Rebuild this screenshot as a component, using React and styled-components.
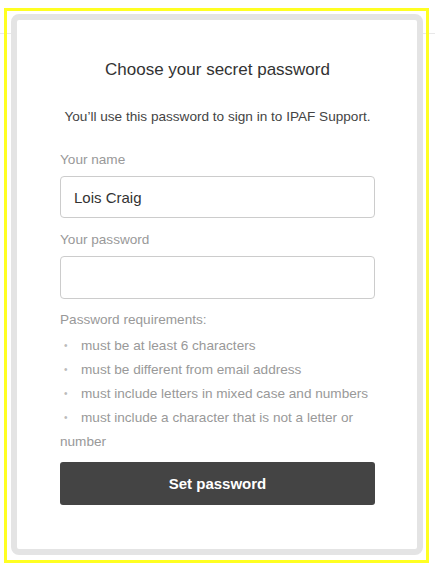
import React from "react";
import styled, { createGlobalStyle } from "styled-components";

const GlobalStyle = createGlobalStyle`
  html, body {
    margin: 0;
    padding: 0;
    background: #fff;
    font-family: "Liberation Sans", Arial, sans-serif;
  }
  body {
    background: linear-gradient(#fff 33px, #e8e8e8 33px, #e8e8e8 34px, #fff 34px) no-repeat;
  }
`;

const Highlight = styled.div`
  box-sizing: border-box;
  width: 425px;
  margin: 8px 0 0 4px;
  border: 3px solid #ffff22;
  padding: 3px 3px 5px 4px;
`;

const Frame = styled.div`
  border: 6px solid #e4e4e4;
  border-radius: 8px;
  background: #fff;
  padding: 40px 42px 44px 43px;
`;

const Title = styled.h1`
  margin: 0;
  font-size: 17px;
  line-height: 20px;
  font-weight: normal;
  color: #333;
  text-align: center;
`;

const Intro = styled.p`
  margin: 27px -10px 0;
  font-size: 13.6px;
  line-height: 20px;
  color: #444;
  text-align: center;
  white-space: nowrap;
`;

const Label = styled.label`
  display: block;
  margin-top: ${(p) => p.$top}px;
  font-size: 13.6px;
  line-height: 20px;
  color: #999;
`;

const Input = styled.input`
  display: block;
  box-sizing: border-box;
  width: 100%;
  height: ${(p) => p.$h}px;
  margin-top: 6px;
  padding: 0 13px;
  border: 1px solid #ccc;
  border-radius: 4px;
  font-family: inherit;
  font-size: 15px;
  color: #333;
  background: #fff;
  outline: none;
`;

const Requirements = styled.div`
  margin-top: 9px;
  font-size: 13.6px;
  line-height: 24px;
  color: #999;
`;

const List = styled.ul`
  margin: 2px 0 0;
  padding: 0;
  list-style: none;
`;

const Item = styled.li`
  &::before {
    content: "•";
    display: inline-block;
    width: 21px;
    padding-left: 4px;
    box-sizing: border-box;
    font-size: 10px;
    color: #bbb;
    vertical-align: 1px;
  }
`;

const Button = styled.button`
  display: block;
  width: 100%;
  height: 43px;
  margin-top: 8px;
  border: none;
  border-radius: 3px;
  background: #444;
  color: #fff;
  font-family: inherit;
  font-size: 15px;
  font-weight: bold;
  cursor: pointer;
`;

const rules = [
  "must be at least 6 characters",
  "must be different from email address",
  "must include letters in mixed case and numbers",
  "must include a character that is not a letter or number",
];

export default function App() {
  return (
    <>
      <GlobalStyle />
      <Highlight>
        <Frame>
          <Title>Choose your secret password</Title>
          <Intro>You’ll use this password to sign in to IPAF Support.</Intro>
          <Label $top={23}>Your name</Label>
          <Input $h={42} defaultValue="Lois Craig" />
          <Label $top={12}>Your password</Label>
          <Input $h={43} type="password" />
          <Requirements>
            Password requirements:
            <List>
              {rules.map((r) => (
                <Item key={r}>{r}</Item>
              ))}
            </List>
          </Requirements>
          <Button>Set password</Button>
        </Frame>
      </Highlight>
    </>
  );
}
